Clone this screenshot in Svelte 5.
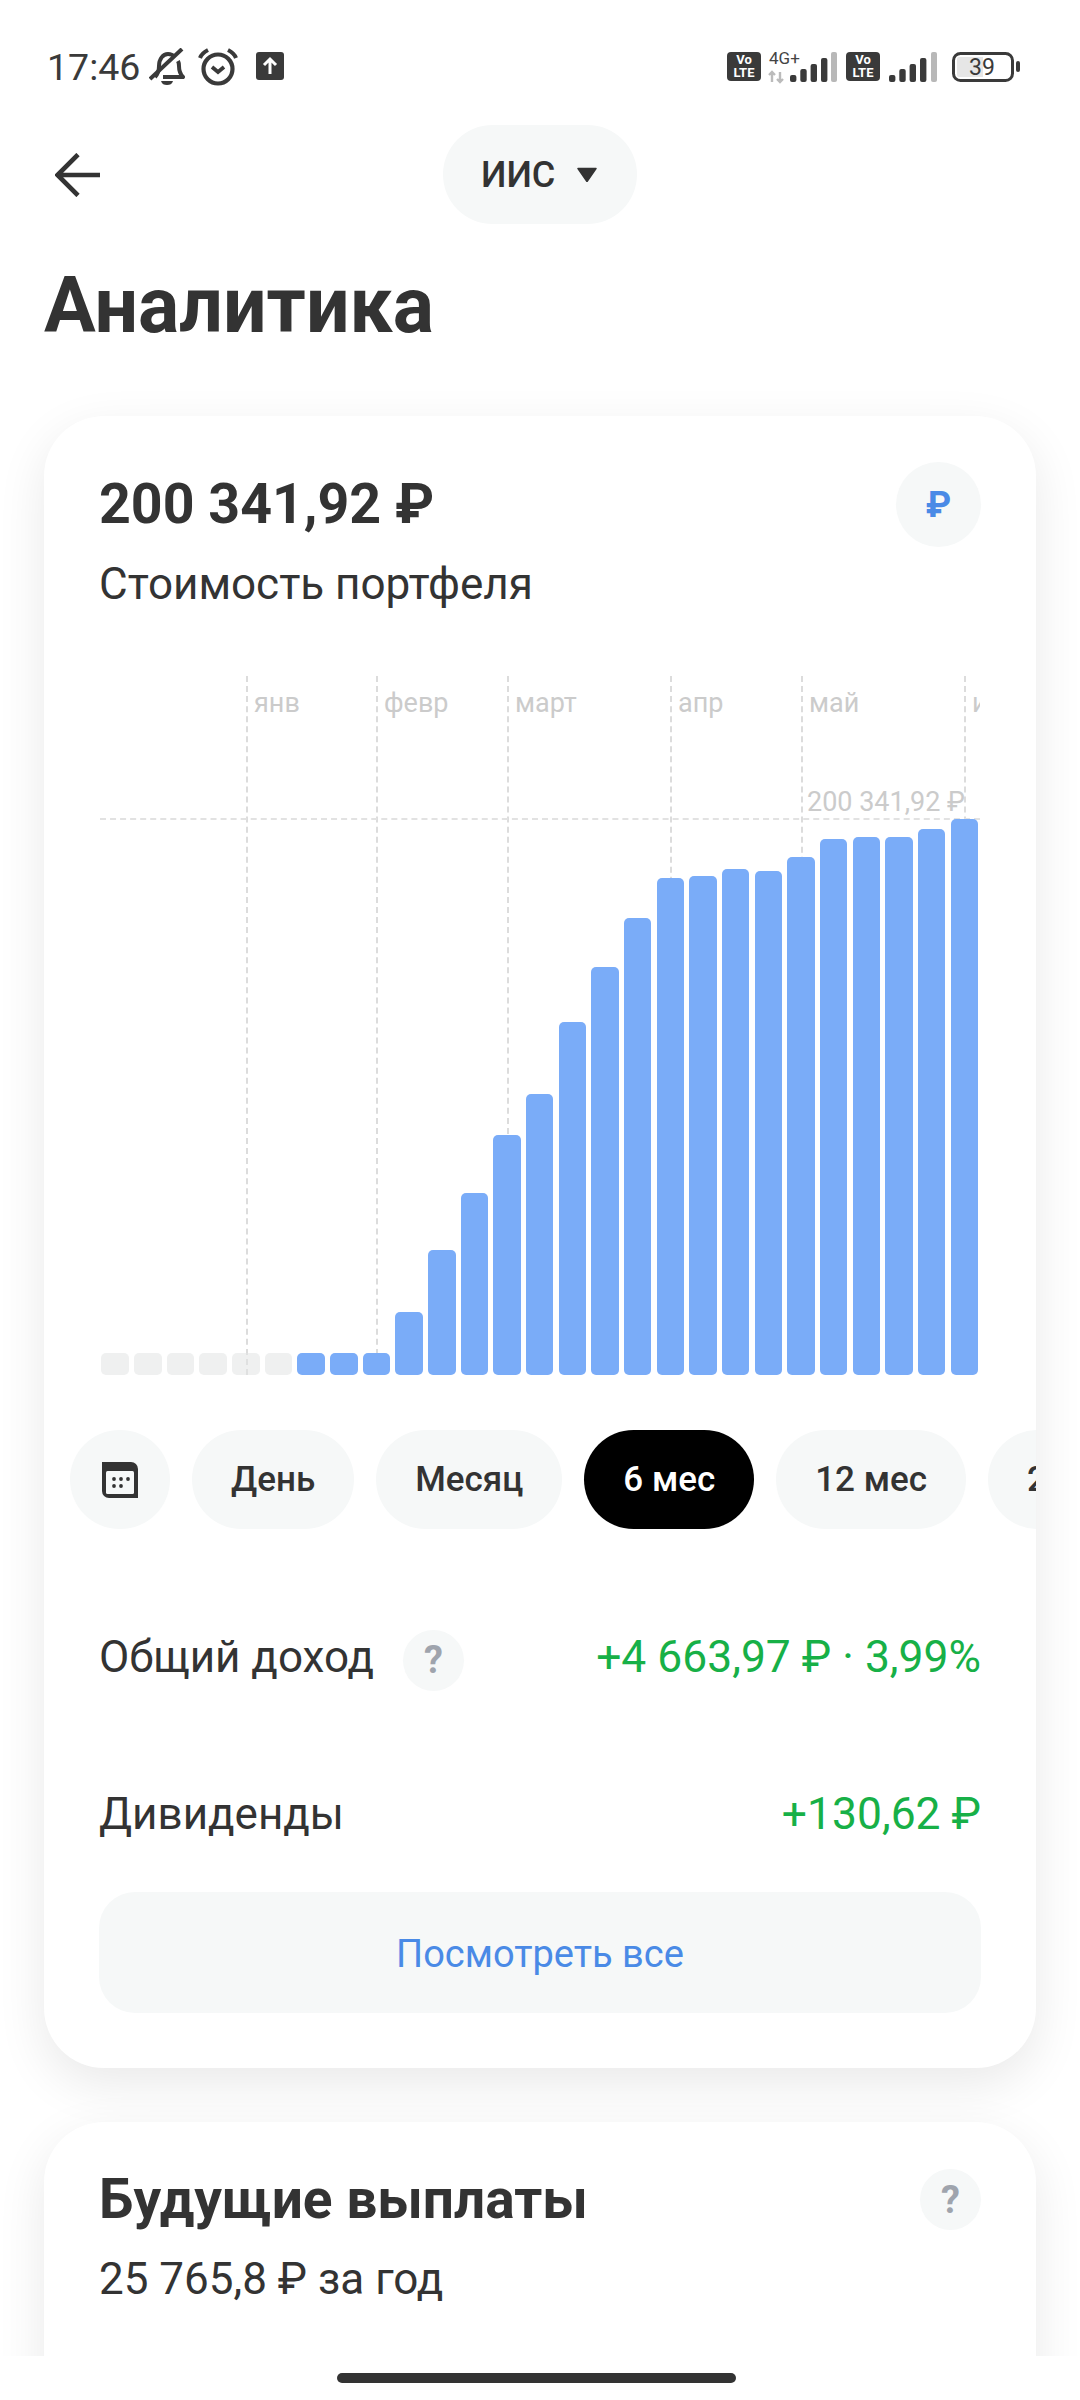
<script>
  // tops of the bars measured from the chart baseline
  const bars = [22, 22, 22, 22, 22, 22, 22, 22, 22, 63, 125, 182, 240, 281, 353, 408, 457, 497, 499, 506, 504, 518, 536, 538, 538, 546, 556];
  const months = [
    { x: 146, name: 'янв' },
    { x: 276, name: 'февр' },
    { x: 407, name: 'март' },
    { x: 570, name: 'апр' },
    { x: 701, name: 'май' },
    { x: 864, name: 'июнь' }
  ];
  const periods = ['День', 'Месяц', '6 мес', '12 мес', '24 мес'];
  let active = '6 мес';
</script>

<div class="page">
  <div class="content">
    <div class="status">
      <div class="status-left">
        <span class="time">17:46</span>
        <svg class="ic-bell" viewBox="0 0 36 38" width="36" height="38">
          <path d="M6 29c3-3 4-6 4-11 0-7 4-12 9-12 3 0 5 1 7 3M29 13c1 2 1 3 1 5 0 5 1 8 4 11H14" fill="none" stroke="#3a3a3a" stroke-width="4" stroke-linejoin="round" />
          <path d="M1 31 33 1" stroke="#3a3a3a" stroke-width="4" />
          <path d="M12 33h12c-1 3-3 4-6 4s-5-1-6-4z" fill="#3a3a3a" />
        </svg>
        <svg class="ic-alarm" viewBox="0 0 40 38" width="40" height="38">
          <circle cx="20" cy="21" r="14.5" fill="none" stroke="#3a3a3a" stroke-width="4.2" />
          <path d="M14 19l6 5 6-5" fill="none" stroke="#3a3a3a" stroke-width="3.8" />
          <path d="M2 10c1-3 4-6 8-8M38 10c-1-3-4-6-8-8" fill="none" stroke="#3a3a3a" stroke-width="4" />
        </svg>
        <svg class="ic-up" viewBox="0 0 28 28" width="28" height="28">
          <rect width="28" height="28" rx="3" fill="#3a3a3a" />
          <path d="M14 22V8M8 13l6-6 6 6" fill="none" stroke="#fff" stroke-width="3" />
        </svg>
      </div>
      <div class="status-right">
        <div class="volte"><span>Vo</span><span>LTE</span></div>
        <svg class="net" viewBox="0 0 68 30" width="68" height="30">
          <text x="0" y="12" class="net-label">4G+</text>
          <path d="M3 20v10M0 23l3-3 3 3M11 20v10M8 27l3 3 3-3" fill="none" stroke="#bbb" stroke-width="2.4" />
          <rect x="21" y="23" width="6.4" height="7" rx="2" fill="#3a3a3a" />
          <rect x="31.3" y="17" width="6.4" height="13" rx="2" fill="#3a3a3a" />
          <rect x="41.6" y="12" width="6.4" height="18" rx="2" fill="#3a3a3a" />
          <rect x="52" y="6" width="6.4" height="24" rx="2" fill="#3a3a3a" />
          <rect x="62" y="0" width="6" height="30" rx="2" fill="#b8b8b8" />
        </svg>
        <div class="volte second"><span>Vo</span><span>LTE</span></div>
        <svg class="sig" viewBox="0 0 48 30" width="48" height="30">
          <rect x="0" y="23" width="6.4" height="7" rx="2" fill="#3a3a3a" />
          <rect x="10.3" y="17" width="6.4" height="13" rx="2" fill="#3a3a3a" />
          <rect x="20.6" y="12" width="6.4" height="18" rx="2" fill="#3a3a3a" />
          <rect x="31" y="6" width="6.4" height="24" rx="2" fill="#3a3a3a" />
          <rect x="42" y="0" width="6" height="30" rx="2" fill="#b8b8b8" />
        </svg>
        <svg class="batt" viewBox="0 0 68 30" width="68" height="30">
          <rect x="1.5" y="1.5" width="59" height="27" rx="7" fill="none" stroke="#3a3a3a" stroke-width="3" />
          <path d="M7 5h24v20H7a2 2 0 0 1-2-2V7a2 2 0 0 1 2-2z" fill="#e6e6e6" />
          <text x="30" y="22.5" class="batt-label" text-anchor="middle">39</text>
          <rect x="64" y="9" width="4" height="11" rx="2" fill="#3a3a3a" />
        </svg>
      </div>
    </div>

    <div class="top">
      <svg class="back" viewBox="0 0 45 44" width="45" height="44">
        <path d="M45 22H3M23 1.5 2.5 22 23 42.5" fill="none" stroke="#333" stroke-width="4.6" />
      </svg>
      <div class="account">
        <span>ИИС</span>
        <svg viewBox="0 0 20 15" width="20" height="15"><path d="M1 1.5h18L10 14.5z" fill="#333" stroke="#333" stroke-width="1.5" stroke-linejoin="round" /></svg>
      </div>
    </div>

    <h1>Аналитика</h1>

    <section class="card">
      <div class="head">
        <div class="head-text">
          <div class="amount">200 341,92 ₽</div>
          <div class="sub">Стоимость портфеля</div>
        </div>
        <div class="currency">₽</div>
      </div>

      <div class="chart">
        {#each months as m}
          <div class="vline" style="left: {m.x}px"></div>
          <div class="month" style="left: {m.x + 8}px">{m.name}</div>
        {/each}
        <div class="hline"></div>
        <div class="max">200 341,92 ₽</div>
        <div class="bars">
          {#each bars as h, i}
            <div class="bar" class:empty={i < 6} style="height: {h}px"></div>
          {/each}
        </div>
      </div>

      <div class="periods">
        <div class="pill cal">
          <svg viewBox="0 0 36 36" width="36" height="36">
            <path d="M0 0h29a7 7 0 0 1 7 7v29H7a7 7 0 0 1-7-7z" fill="#333" />
            <rect x="4" y="9" width="28" height="23" rx="1.5" fill="#f6f8f8" />
            <g fill="#333">
              <circle cx="12" cy="17" r="1.9" /><circle cx="19" cy="17" r="1.9" /><circle cx="26" cy="17" r="1.9" />
              <circle cx="12" cy="24" r="1.9" /><circle cx="19" cy="24" r="1.9" />
            </g>
          </svg>
        </div>
        {#each periods as p}
          <div class="pill" class:active={p === active}>{p}</div>
        {/each}
      </div>

      <div class="row first">
        <div class="row-label">
          <span class="lift">Общий доход</span>
          <span class="hint">?</span>
        </div>
        <span class="plus lift">+4 663,97 ₽ · 3,99%</span>
      </div>
      <div class="row second">
        <span class="lift">Дивиденды</span>
        <span class="plus lift">+130,62 ₽</span>
      </div>

      <div class="more">Посмотреть все</div>
    </section>

    <section class="card next">
      <div class="next-head">
        <h2>Будущие выплаты</h2>
        <span class="hint">?</span>
      </div>
      <div class="sub year">25 765,8 ₽ за год</div>
    </section>
  </div>

  <div class="navbar"><div class="handle"></div></div>
</div>

<style>
  :global(body) {
    margin: 0;
    background: #fff;
  }

  .page {
    width: 1080px;
    height: 2400px;
    display: flex;
    flex-direction: column;
    background: #fff;
    color: #333;
    font-family: Roboto, "Noto Sans", sans-serif;
  }

  .content {
    flex: 1;
    min-height: 0;
    overflow: hidden;
  }

  .status {
    height: 125px;
    box-sizing: border-box;
    padding: 48px 60px 0 47px;
    display: flex;
    justify-content: space-between;
    align-items: flex-start;
    color: #3a3a3a;
  }

  .status-left {
    display: flex;
    align-items: flex-start;
  }

  .time {
    font-size: 37.5px;
    line-height: 38px;
    width: 102px;
  }

  .ic-alarm {
    margin-left: 13px;
  }

  .ic-up {
    margin: 4px 0 0 18px;
  }

  .status-right {
    display: flex;
    align-items: flex-start;
    padding-top: 4px;
  }

  .volte {
    width: 34px;
    height: 29px;
    background: #3a3a3a;
    border-radius: 4px;
    color: #fff;
    font-size: 13px;
    font-weight: 700;
    line-height: 12.5px;
    display: flex;
    flex-direction: column;
    align-items: center;
    justify-content: center;
  }

  .volte.second {
    margin-left: 9px;
  }

  .net {
    margin-left: 8px;
    overflow: visible;
  }

  .net-label {
    font-size: 17px;
    fill: #444;
  }

  .sig {
    margin-left: 9px;
  }

  .batt {
    margin-left: 15px;
  }

  .batt-label {
    font-size: 23px;
    fill: #3a3a3a;
  }

  .top {
    height: 99px;
    display: flex;
    justify-content: center;
    align-items: center;
    position: relative;
  }

  .back {
    position: absolute;
    left: 55px;
    top: 28px;
  }

  .account {
    width: 194px;
    height: 99px;
    box-sizing: border-box;
    padding-left: 38px;
    border-radius: 50px;
    background: #f6f8f8;
    display: flex;
    align-items: center;
    gap: 22px;
    font-size: 36px;
    font-weight: 500;
  }

  h1 {
    margin: 37px 0 0 44px;
    font-size: 77px;
    line-height: 90px;
    font-weight: 700;
  }

  .card {
    margin: 65px 44px 0;
    box-sizing: border-box;
    padding: 46px 55px 55px;
    border-radius: 60px;
    background: #fff;
    box-shadow: 0 16px 50px rgba(0, 0, 0, 0.09);
  }

  .head {
    display: flex;
    justify-content: space-between;
  }

  .head-text {
    padding-top: 13px;
  }

  .amount {
    font-size: 55.5px;
    line-height: 60px;
    font-weight: 700;
  }

  .sub {
    margin-top: 24px;
    font-size: 44px;
    line-height: 50px;
  }

  .currency {
    width: 85px;
    height: 85px;
    border-radius: 50%;
    background: #f6f8f8;
    color: #4a8ae6;
    font-size: 36px;
    font-weight: 700;
    display: flex;
    align-items: center;
    justify-content: center;
  }

  .chart {
    position: relative;
    height: 699px;
    margin: 67px 1px 0;
    overflow: hidden;
  }

  .vline {
    position: absolute;
    top: 0;
    bottom: 0;
    border-left: 2px dashed #dcdcdc;
  }

  .month {
    position: absolute;
    top: 10px;
    font-size: 27px;
    line-height: 34px;
    color: #cbcbcb;
    white-space: nowrap;
  }

  .hline {
    position: absolute;
    left: 0;
    right: 0;
    top: 142px;
    border-top: 2px dashed #e2e2e2;
  }

  .max {
    position: absolute;
    right: 15px;
    top: 109px;
    font-size: 27px;
    line-height: 34px;
    color: #cbcbcb;
    white-space: nowrap;
  }

  .bars {
    position: absolute;
    left: 0;
    right: 0;
    bottom: 0;
    padding-right: 2px;
    display: flex;
    justify-content: flex-end;
    align-items: flex-end;
    gap: 5.17px;
  }

  .bar {
    flex: 0 0 27.5px;
    border-radius: 5px;
    background: #7aacf8;
  }

  .bar.empty {
    background: rgba(225, 228, 228, 0.55);
  }

  .periods {
    margin: 55px -55px 0 -29px;
    display: flex;
    gap: 22px;
    overflow: hidden;
  }

  .pill {
    flex: 0 0 auto;
    height: 99px;
    box-sizing: border-box;
    padding: 0 39px;
    border-radius: 50px;
    background: #f6f8f8;
    display: flex;
    align-items: center;
    font-size: 35px;
    font-weight: 500;
  }

  .pill.cal {
    width: 100px;
    padding: 0;
    justify-content: center;
  }

  .pill.active {
    background: #000;
    color: #fff;
  }

  .row {
    display: flex;
    justify-content: space-between;
    align-items: center;
    font-size: 44px;
    line-height: 50px;
  }

  .row.first {
    margin-top: 100px;
    height: 62px;
  }

  .row.second {
    margin-top: 101px;
    height: 50px;
  }

  .row-label {
    display: flex;
    align-items: center;
    gap: 29px;
  }

  .lift {
    margin-top: -6px;
  }

  .plus {
    color: #17b047;
    font-size: 44.4px;
  }

  .hint {
    width: 61px;
    height: 61px;
    border-radius: 50%;
    background: #f6f8f8;
    color: #9fa4ad;
    font-size: 38px;
    font-weight: 700;
    display: flex;
    align-items: center;
    justify-content: center;
  }

  .more {
    margin-top: 50px;
    height: 121px;
    box-sizing: border-box;
    padding-top: 2px;
    border-radius: 36px;
    background: #f6f8f8;
    color: #4a8ae6;
    font-size: 38px;
    display: flex;
    align-items: center;
    justify-content: center;
  }

  .card.next {
    margin-top: 54px;
    padding-top: 47px;
    height: 400px;
  }

  .next-head {
    display: flex;
    justify-content: space-between;
    align-items: center;
  }

  h2 {
    margin: 0;
    font-size: 55px;
    line-height: 61px;
    font-weight: 700;
  }

  .navbar {
    height: 44px;
    background: #fff;
    position: relative;
    box-sizing: border-box;
    padding-top: 17px;
    display: flex;
    justify-content: center;
  }

  .handle {
    width: 399px;
    height: 10px;
    margin-left: -7px;
    border-radius: 5px;
    background: #333;
  }
</style>
